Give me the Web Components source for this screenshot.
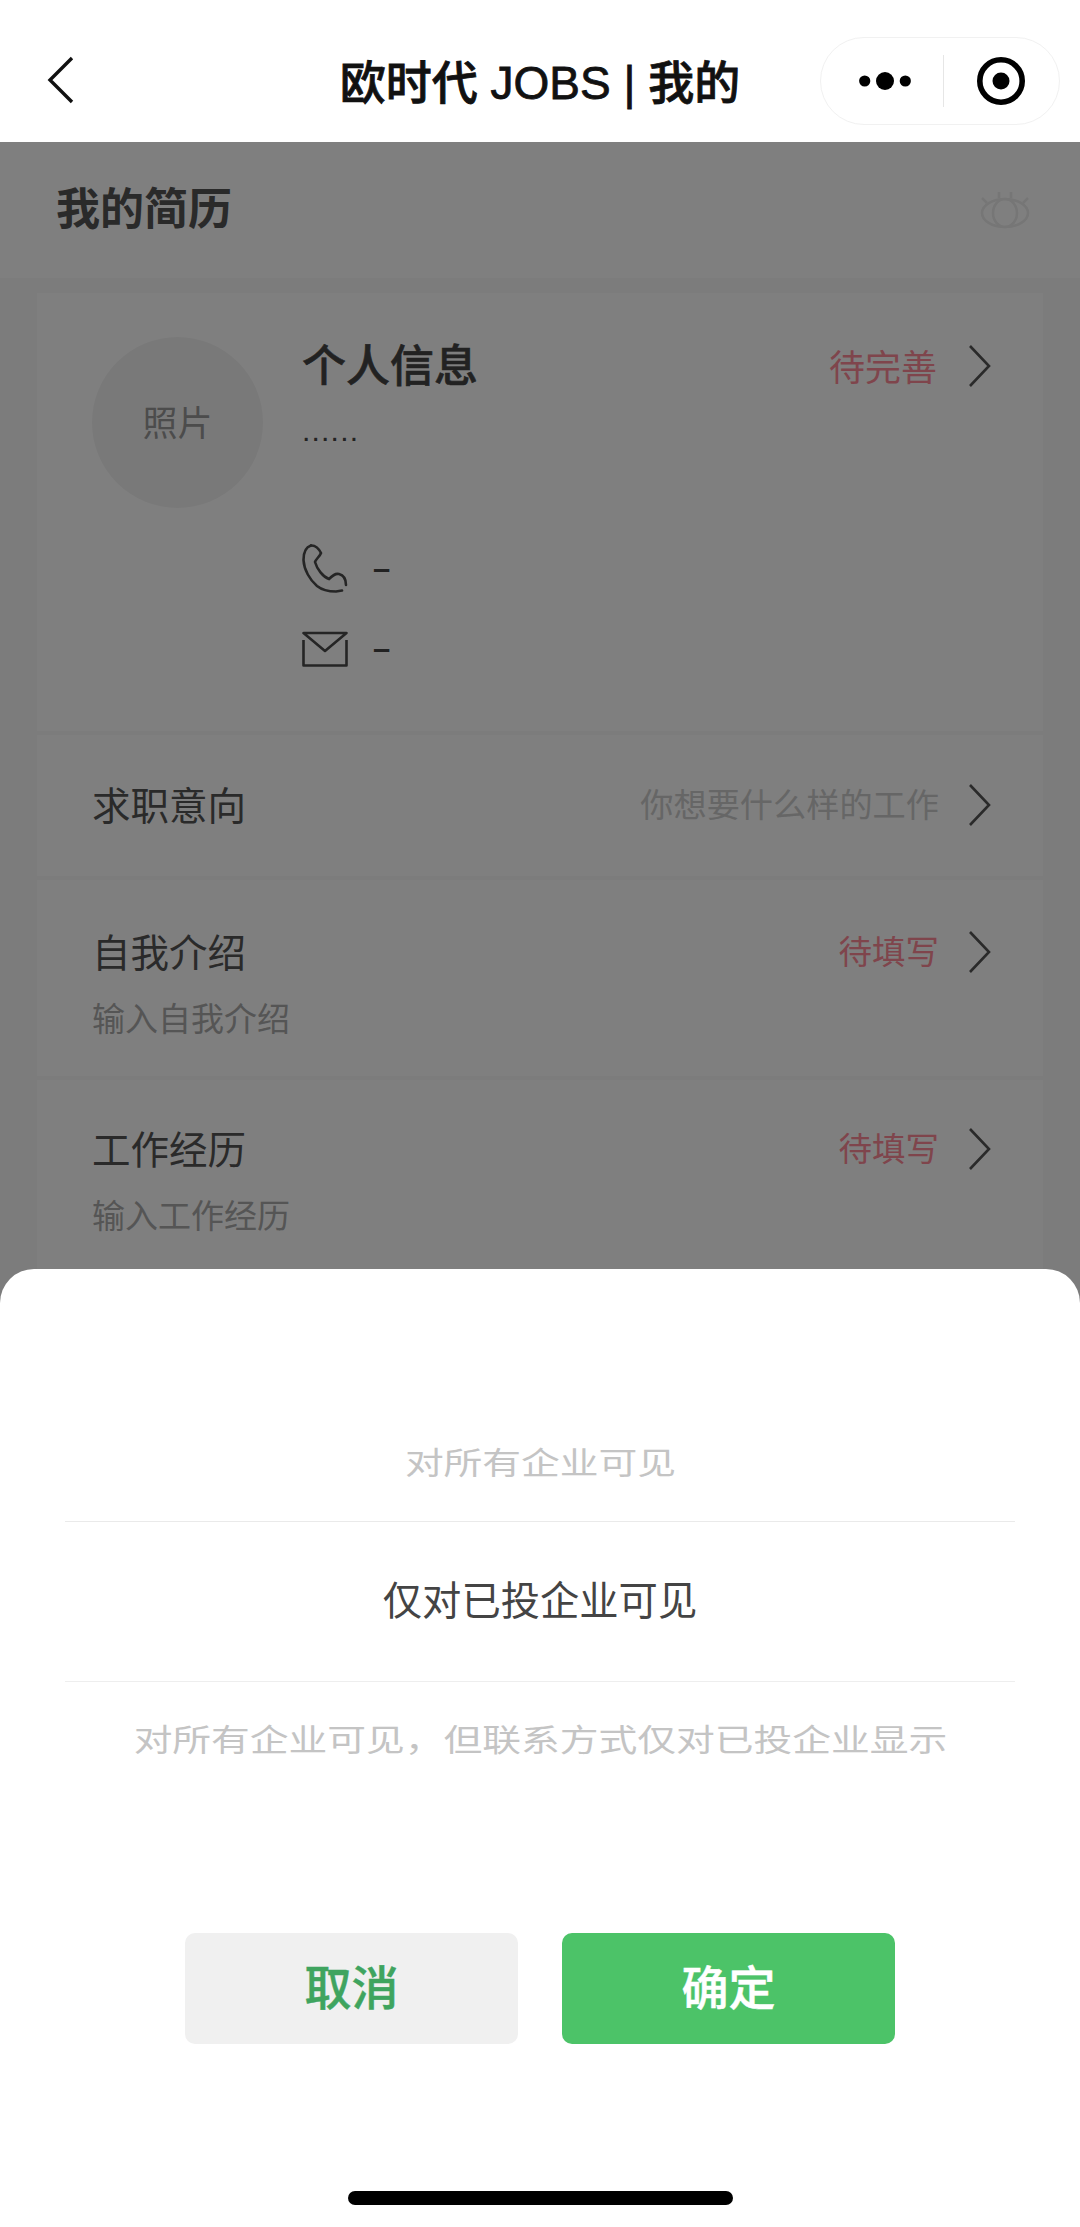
<!DOCTYPE html>
<html lang="zh">
<head>
<meta charset="utf-8">
<title>欧时代 JOBS | 我的</title>
<style>
  html, body { margin: 0; height: 100%; background: #fff; }
  body { font-family: "Liberation Sans", "Noto Sans CJK SC", sans-serif; overflow: hidden; }
</style>
</head>
<body>
<app-page>
  <nav-bar slot="nav">欧时代 JOBS | 我的</nav-bar>
  <resume-head>我的简历</resume-head>
  <profile-card></profile-card>
  <resume-row label="求职意向" status="你想要什么样的工作" kind="muted" style="--h:141px;--pt:45px"></resume-row>
  <resume-row label="自我介绍" status="待填写" hint="输入自我介绍" style="--h:196px;--pt:47px"></resume-row>
  <resume-row label="工作经历" status="待填写" hint="输入工作经历" style="--h:196px;--pt:44px"></resume-row>
  <visibility-sheet slot="sheet">
    <option-wheel></option-wheel>
    <sheet-button slot="actions">取消</sheet-button>
    <sheet-button slot="actions" primary>确定</sheet-button>
  </visibility-sheet>
</app-page>

<script>
const CHEVRON = `<svg width="24" height="44" viewBox="0 0 24 44" fill="none" stroke="currentColor" stroke-width="2.6"><path d="M2 2 L21 22 L2 42"/></svg>`;

class AppPage extends HTMLElement {
  constructor() {
    super();
    this.attachShadow({ mode: "open" });
    this.shadowRoot.innerHTML = `
      <style>
        :host { display: block; position: relative; width: 1080px; height: 2227px; overflow: hidden; background: #f9f9f9; }
        .under { display: flex; flex-direction: column; gap: 4px; }
        .spacer { height: 142px; margin-bottom: -4px; }
        .scrim { position: absolute; inset: 142px 0 0; background: rgba(0,0,0,.5); }
        .top { position: absolute; left: 0; right: 0; top: 0; }
        .bottom { position: absolute; left: 0; right: 0; bottom: 0; }
      </style>
      <div class="under"><div class="spacer"></div><slot></slot></div>
      <div class="scrim"></div>
      <div class="top"><slot name="nav"></slot></div>
      <div class="bottom"><slot name="sheet"></slot></div>
    `;
  }
}

class NavBar extends HTMLElement {
  constructor() {
    super();
    this.attachShadow({ mode: "open" });
    this.shadowRoot.innerHTML = `
      <style>
        :host { display: flex; align-items: center; box-sizing: border-box; height: 142px; background: #fff; padding: 22px 0 0 47px; position: relative; }
        .back { display: flex; margin-top: -4px; }
        .title { position: absolute; left: 0; right: 0; top: 56px; text-align: center; font: 500 46px/54px "Liberation Sans", "Noto Sans CJK SC", sans-serif; -webkit-text-stroke: .8px #111; color: #111; }
        .capsule { margin-left: auto; margin-right: 20px; margin-top: -2px; width: 240px; height: 88px; box-sizing: border-box; border: 1px solid #f1f1f1; border-radius: 44px; background: #fff; display: flex; align-items: center; position: relative; z-index: 1; }
        .capsule > div { flex: 1; display: flex; justify-content: center; align-items: center; height: 52px; }
        .capsule > div:first-child { padding-left: 6px; }
        .capsule > div + div { border-left: 1px solid #e6e6e6; }
      </style>
      <svg class="back" width="28" height="48" viewBox="0 0 28 48" fill="none" stroke="#111" stroke-width="3.4"><path d="M25 2 L3 24 L25 46"/></svg>
      <div class="title"><slot></slot></div>
      <div class="capsule">
        <div><svg width="52" height="20" viewBox="0 0 52 20" fill="#000"><circle cx="5.7" cy="10" r="5.6"/><circle cx="26" cy="10" r="9"/><circle cx="46.3" cy="10" r="5.6"/></svg></div>
        <div><svg width="48" height="48" viewBox="0 0 48 48"><circle cx="24" cy="24" r="21.2" fill="none" stroke="#000" stroke-width="5.6"/><circle cx="24" cy="24" r="8.5" fill="#000"/></svg></div>
      </div>
    `;
  }
}

class ResumeHead extends HTMLElement {
  constructor() {
    super();
    this.attachShadow({ mode: "open" });
    this.shadowRoot.innerHTML = `
      <style>
        :host { display: flex; align-items: center; justify-content: space-between; height: 136px; margin-bottom: 11px; padding: 0 50px 0 56px; background: #fff; font: 700 44px/50px "Liberation Sans", "Noto Sans CJK SC", sans-serif; color: #555; }
        svg { display: block; }
      </style>
      <slot></slot>
      <svg width="50" height="38" viewBox="0 0 50 38" fill="none" stroke="#ececec" stroke-width="2.6"><ellipse cx="25" cy="22" rx="23" ry="14"/><ellipse cx="25" cy="22" rx="12" ry="14"/><path d="M19 7 V1 M31 7 V1 M7 12 L2 7 M43 12 L48 7"/></svg>
    `;
  }
}

class ProfileCard extends HTMLElement {
  constructor() {
    super();
    this.attachShadow({ mode: "open" });
    this.shadowRoot.innerHTML = `
      <style>
        :host { display: flex; box-sizing: border-box; height: 438px; margin: 0 37px; background: #fff; padding: 44px 51px 0 55px; font-family: "Liberation Sans", "Noto Sans CJK SC", sans-serif; }
        .photo { width: 171px; height: 171px; box-sizing: border-box; padding-bottom: 4px; border-radius: 50%; background: #f3f3f3; color: #999; font-size: 35px; display: flex; align-items: center; justify-content: center; flex: none; }
        .main { margin-left: 39px; flex: 1; }
        .top { display: flex; align-items: center; height: 60px; }
        h2 { margin: 0; font: 500 44px/60px "Liberation Sans", "Noto Sans CJK SC", sans-serif; -webkit-text-stroke: .6px #444; color: #444; flex: 1; }
        .status { font-size: 36px; color: #ff8a98; margin-right: 31px; margin-bottom: 5px; }
        .chev { display: flex; color: #555; margin-bottom: 3px; }
        .dots { font-size: 30px; line-height: 40px; color: #444; margin-top: 14px; height: 118px; letter-spacing: 1.2px; }
        .contact { display: flex; align-items: center; height: 80px; color: #444; font-size: 31px; gap: 25px; }
        .contact svg { display: block; }
        .contact span { font-weight: 700; }
      </style>
      <div class="photo">照片</div>
      <div class="main">
        <div class="top"><h2>个人信息</h2><span class="status">待完善</span><span class="chev">${CHEVRON}</span></div>
        <div class="dots">......</div>
        <div class="contact">
          <svg width="46" height="50" viewBox="0 0 46 50" fill="none" stroke="#4a4a4a" stroke-width="2.6" stroke-linecap="round"><path d="M9 1.5 C4 3 1.5 8 1.5 16 C2 26 8 36 15 42 C20 46 25 47.5 34 47.5 L40 46.5"/><path d="M9 1.5 C13 1 17 5 19 9 C18 12 14 15 13 18 C15 25 21 33 27 35 C30 32 33 29 37 30 C41 31 44 35 44 41"/></svg>
          <span>–</span>
        </div>
        <div class="contact">
          <svg width="46" height="36" viewBox="0 0 46 36" fill="none" stroke="#4a4a4a" stroke-width="2.6" stroke-linejoin="round"><path d="M1.5 2 H44.5 L23 20 Z"/><path d="M1.5 9 V34.5 H44.5 V9"/></svg>
          <span>–</span>
        </div>
      </div>
    `;
  }
}

class ResumeRow extends HTMLElement {
  constructor() {
    super();
    this.attachShadow({ mode: "open" });
    const muted = this.getAttribute("kind") === "muted";
    const hint = this.getAttribute("hint");
    this.shadowRoot.innerHTML = `
      <style>
        :host { display: block; box-sizing: border-box; height: var(--h); margin: 0 37px; background: #fff; padding: var(--pt) 51px 0 55px; font-family: "Liberation Sans", "Noto Sans CJK SC", sans-serif; }
        .top { display: flex; align-items: center; height: 50px; }
        .label { flex: 1; font-size: 38.5px; color: #555; margin-bottom: 4px; }
        .status { font-size: ${muted ? "33.2px" : "33.5px"}; color: ${muted ? "#ccc" : "#ff8a98"}; margin-right: 29px; margin-bottom: 6px; }
        .chev { display: flex; color: #555; }
        .hint { margin-top: 22px; font-size: 33px; line-height: 42px; color: #aaa; }
      </style>
      <div class="top"><span class="label">${this.getAttribute("label")}</span><span class="status">${this.getAttribute("status")}</span><span class="chev">${CHEVRON}</span></div>
      ${hint ? `<div class="hint">${hint}</div>` : ""}
    `;
  }
}

class VisibilitySheet extends HTMLElement {
  constructor() {
    super();
    this.attachShadow({ mode: "open" });
    this.shadowRoot.innerHTML = `
      <style>
        :host { display: block; box-sizing: border-box; height: 958px; background: #fff; border-radius: 34px 34px 0 0; padding-top: 144px; font-family: "Liberation Sans", "Noto Sans CJK SC", sans-serif; }
        .actions { display: flex; justify-content: center; gap: 44px; margin-top: 133px; }
        .home { width: 385px; height: 14px; border-radius: 7px; background: #000; margin: 147px auto 0; }
      </style>
      <slot></slot>
      <div class="actions"><slot name="actions"></slot></div>
      <div class="home"></div>
    `;
  }
}

class OptionWheel extends HTMLElement {
  constructor() {
    super();
    this.attachShadow({ mode: "open" });
    this.shadowRoot.innerHTML = `
      <style>
        :host { display: block; text-align: center; color: #c4c4c4; }
        span { display: inline-block; font-size: 31px; transform: scaleX(1.25); white-space: nowrap; }
        .first { height: 108px; line-height: 102px; }
        .sel { margin: 0 65px; height: 159px; line-height: 158px; border-top: 1px solid #eaeaea; border-bottom: 1px solid #eee; color: #444; font-size: 39.3px; }
        .last { height: 118px; line-height: 118px; }
      </style>
      <div class="first"><span>对所有企业可见</span></div>
      <div class="sel">仅对已投企业可见</div>
      <div class="last"><span>对所有企业可见，但联系方式仅对已投企业显示</span></div>
    `;
  }
}

class SheetButton extends HTMLElement {
  constructor() {
    super();
    this.attachShadow({ mode: "open" });
    const on = this.hasAttribute("primary");
    const ink = on ? "#fff" : "#3fa45f";
    this.shadowRoot.innerHTML = `
      <style>
        :host { display: flex; align-items: center; justify-content: center; width: 333px; height: 111px; border-radius: 10px; background: ${on ? "#4cc368" : "#f0f0f0"}; color: ${ink}; -webkit-text-stroke: .5px ${ink}; font: 500 47px/50px "Liberation Sans", "Noto Sans CJK SC", sans-serif; }
      </style>
      <slot></slot>
    `;
  }
}

customElements.define("app-page", AppPage);
customElements.define("nav-bar", NavBar);
customElements.define("resume-head", ResumeHead);
customElements.define("profile-card", ProfileCard);
customElements.define("resume-row", ResumeRow);
customElements.define("visibility-sheet", VisibilitySheet);
customElements.define("option-wheel", OptionWheel);
customElements.define("sheet-button", SheetButton);
</script>
</body>
</html>
